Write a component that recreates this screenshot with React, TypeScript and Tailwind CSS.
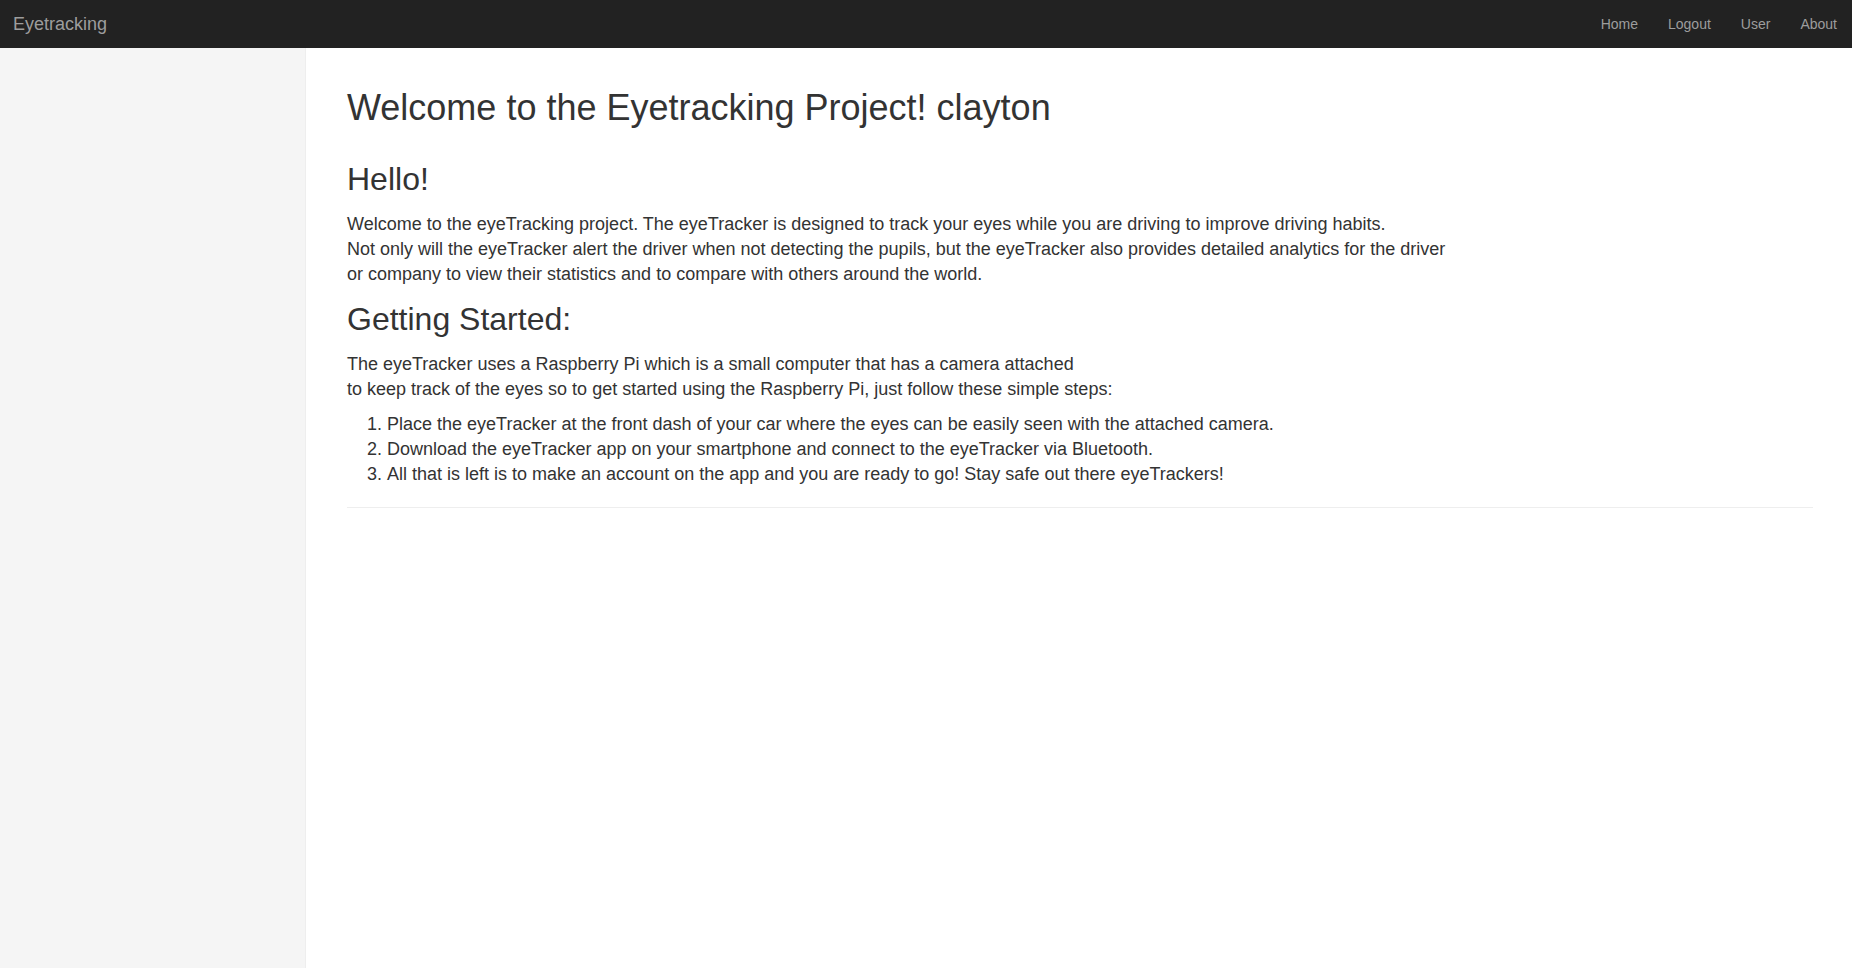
const navLinks = ["Home", "Logout", "User", "About"];

const steps = [
  "Place the eyeTracker at the front dash of your car where the eyes can be easily seen with the attached camera.",
  "Download the eyeTracker app on your smartphone and connect to the eyeTracker via Bluetooth.",
  "All that is left is to make an account on the app and you are ready to go! Stay safe out there eyeTrackers!",
];

export default function App() {
  return (
    <div className="flex min-h-screen flex-col bg-white font-['Liberation_Sans',Arial,sans-serif] text-[#333]">
      <nav className="flex h-[48px] shrink-0 items-center justify-between bg-[#222]">
        <a className="pl-[13px] pr-[15px] text-[18px] leading-[20px] text-[#9d9d9d]" href="#">
          Eyetracking
        </a>
        <ul className="flex">
          {navLinks.map((link) => (
            <li key={link}>
              <a className="block px-[15px] text-[14px] leading-[20px] text-[#9d9d9d]" href="#">
                {link}
              </a>
            </li>
          ))}
        </ul>
      </nav>

      <div className="flex flex-1">
        <aside className="w-[306px] shrink-0 border-r border-[#eee] bg-[#f5f5f5]" />

        <main className="min-w-0 flex-1 pl-[41px] pr-[39px]">
          <h1 className="mt-[40px] text-[36px] leading-[1.1]">
            Welcome to the Eyetracking Project! clayton
          </h1>

          <h2 className="mt-[34px] text-[32px] leading-[1.1]">Hello!</h2>
          <p className="mt-[15px] text-[18px] leading-[25px]">
            Welcome to the eyeTracking project. The eyeTracker is designed to track your eyes while you are driving to improve driving habits.
            <br />
            Not only will the eyeTracker alert the driver when not detecting the pupils, but the eyeTracker also provides detailed analytics for the driver
            <br />
            or company to view their statistics and to compare with others around the world.
          </p>

          <h2 className="mt-[15px] text-[32px] leading-[1.1]">Getting Started:</h2>
          <p className="mt-[15px] text-[18px] leading-[25px]">
            The eyeTracker uses a Raspberry Pi which is a small computer that has a camera attached
            <br />
            to keep track of the eyes so to get started using the Raspberry Pi, just follow these simple steps:
          </p>
          <ol className="mt-[10px] list-decimal pl-[40px] text-[18px] leading-[25px]">
            {steps.map((step) => (
              <li key={step}>{step}</li>
            ))}
          </ol>

          <hr className="mt-[20px] border-t border-[#eee]" />
        </main>
      </div>
    </div>
  );
}
